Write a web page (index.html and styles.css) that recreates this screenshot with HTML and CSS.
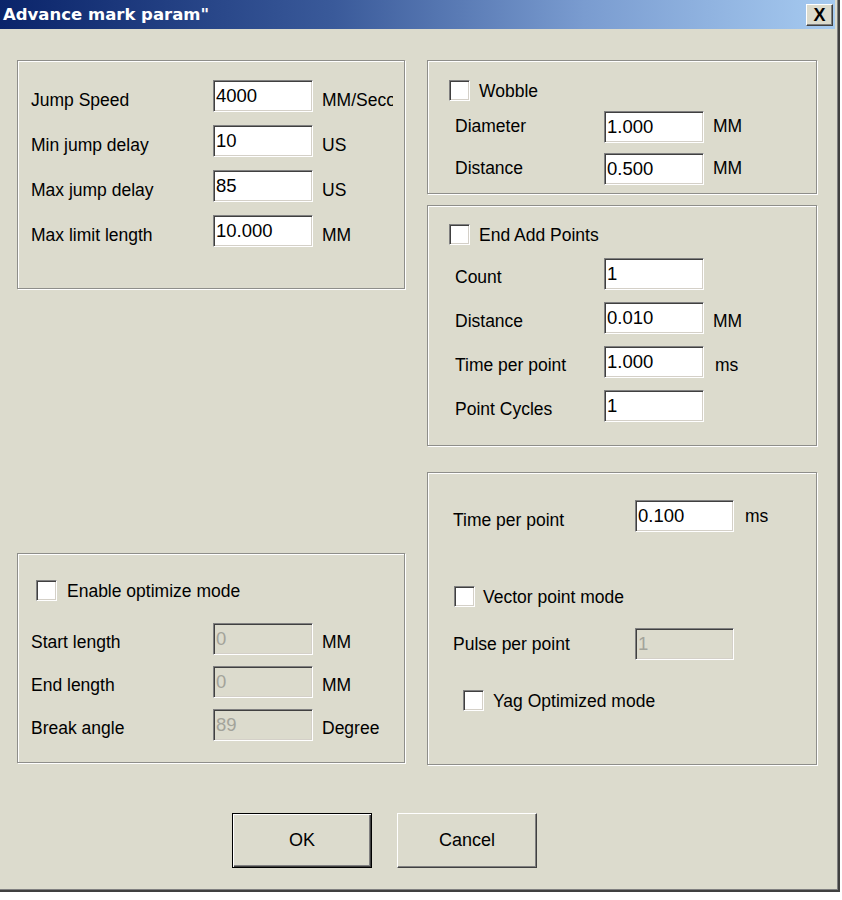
FILE: index.html
```html
<!DOCTYPE html>
<html>
<head>
<meta charset="utf-8">
<title>Advance mark param</title>
<link rel="stylesheet" href="styles.css">
</head>
<body>
<div class="window">
  <div class="titlebar">
    <span class="title">Advance mark param"</span>
    <span class="close">X</span>
  </div>
  <div class="client">
    <div class="columns">
      <div class="col col-left">
        <div class="group g1">
          <div class="row"><span class="lbl">Jump Speed</span><input class="field" type="text" value="4000" readonly><span class="unit clip">MM/Second</span></div>
          <div class="row"><span class="lbl">Min jump delay</span><input class="field" type="text" value="10" readonly><span class="unit">US</span></div>
          <div class="row"><span class="lbl">Max jump delay</span><input class="field" type="text" value="85" readonly><span class="unit">US</span></div>
          <div class="row"><span class="lbl">Max limit length</span><input class="field" type="text" value="10.000" readonly><span class="unit">MM</span></div>
        </div>
        <div class="group g4">
          <div class="check"><span class="cb"></span><span class="cap">Enable optimize mode</span></div>
          <div class="row"><span class="lbl">Start length</span><input class="field" type="text" value="0" disabled><span class="unit">MM</span></div>
          <div class="row"><span class="lbl">End length</span><input class="field" type="text" value="0" disabled><span class="unit">MM</span></div>
          <div class="row"><span class="lbl">Break angle</span><input class="field" type="text" value="89" disabled><span class="unit">Degree</span></div>
        </div>
      </div>
      <div class="col col-right">
        <div class="group g2">
          <div class="check"><span class="cb"></span><span class="cap">Wobble</span></div>
          <div class="row"><span class="lbl">Diameter</span><input class="field" type="text" value="1.000" readonly><span class="unit">MM</span></div>
          <div class="row"><span class="lbl">Distance</span><input class="field" type="text" value="0.500" readonly><span class="unit">MM</span></div>
        </div>
        <div class="group g3">
          <div class="check"><span class="cb"></span><span class="cap">End Add Points</span></div>
          <div class="row"><span class="lbl">Count</span><input class="field" type="text" value="1" readonly></div>
          <div class="row"><span class="lbl">Distance</span><input class="field" type="text" value="0.010" readonly><span class="unit">MM</span></div>
          <div class="row"><span class="lbl">Time per point</span><input class="field" type="text" value="1.000" readonly><span class="unit ms">ms</span></div>
          <div class="row"><span class="lbl">Point Cycles</span><input class="field" type="text" value="1" readonly></div>
        </div>
        <div class="group g5">
          <div class="row r-time"><span class="lbl">Time per point</span><input class="field" type="text" value="0.100" readonly><span class="unit">ms</span></div>
          <div class="check c-vector"><span class="cb"></span><span class="cap">Vector point mode</span></div>
          <div class="row r-pulse"><span class="lbl">Pulse per point</span><input class="field" type="text" value="1" disabled></div>
          <div class="check c-yag"><span class="cb"></span><span class="cap">Yag Optimized mode</span></div>
        </div>
      </div>
    </div>
    <div class="buttons">
      <span class="btn btn-default">OK</span>
      <span class="btn">Cancel</span>
    </div>
  </div>
</div>
</body>
</html>
```
FILE: styles.css
```css
* { box-sizing: border-box; }

body {
  margin: 0;
  background: #ffffff;
  font-family: "Liberation Sans", Arial, sans-serif;
  font-size: 17.5px;
  color: #000;
}

.window {
  width: 840px;
  height: 892px;
  background: #dcdbcd;
  border-right: 2px solid #404040;
  border-bottom: 2px solid #404040;
  box-shadow: inset -1px -1px #808080;
}

.titlebar {
  height: 29px;
  margin-right: 3px;
  background: linear-gradient(to right, #0a246a 0%, #3a5a9a 40%, #7a9cd0 70%, #a6caf0 100%);
  display: flex;
  align-items: center;
  justify-content: space-between;
  padding: 0 2px 0 3px;
}

.title {
  font-family: "DejaVu Sans", sans-serif;
  font-weight: bold;
  font-size: 16.5px;
  color: #fff;
  line-height: 29px;
}

.close {
  width: 27px;
  height: 22px;
  background: #dcdbcd;
  border: 1px solid;
  border-color: #fff #404040 #404040 #fff;
  box-shadow: inset -1px -1px #808080;
  display: flex;
  align-items: center;
  justify-content: center;
  font-family: "Liberation Sans", Arial, sans-serif;
  font-weight: bold;
  font-size: 18px;
  line-height: 1;
  color: #000;
}

.client {
  padding: 31px 0 0 17px;
}

.columns {
  display: flex;
  gap: 22px;
}

.col {
  display: flex;
  flex-direction: column;
}

.col-left { width: 388px; }
.col-right { width: 390px; }

.group {
  border: 1px solid #8e8e8a;
  box-shadow: inset 1px 1px #fff, 1px 1px #fff;
  display: flex;
  flex-direction: column;
}

.row {
  display: flex;
  align-items: flex-start;
}

.lbl, .unit, .cap {
  line-height: 20px;
  white-space: nowrap;
}

.field {
  width: 100px;
  height: 32px;
  margin: 0;
  padding: 0 2px;
  font-family: "Liberation Sans", Arial, sans-serif;
  font-size: 18.5px;
  color: #000;
  background: #fff;
  border: 1px solid;
  border-color: #808080 #fff #fff #808080;
  box-shadow: inset 1px 1px #404040, inset -1px -1px #d4d0c8;
  outline: none;
}

.field:disabled {
  background: #dcdbcd;
  color: #a3a39a;
  -webkit-text-fill-color: #a3a39a;
  opacity: 1;
}

.unit { margin-left: 9px; }
.clip { width: 71px; overflow: hidden; }

.check {
  display: flex;
  align-items: center;
}

.cb {
  width: 21px;
  height: 21px;
  flex: none;
  background: #fff;
  border: 1px solid;
  border-color: #808080 #fff #fff #808080;
  box-shadow: inset 1px 1px #404040, inset -1px -1px #d4d0c8;
}

.cap {
  margin-left: 9px;
  padding-top: 2px;
}

/* Group 1: jump settings */
.g1 {
  height: 229px;
  padding: 19px 0 0 13px;
  gap: 13px;
}
.g1 .lbl { width: 182px; }
.g1 .lbl, .g1 .unit { padding-top: 10px; }

/* Group 4: optimize mode */
.g4 {
  height: 210px;
  margin-top: 264px;
  padding: 25px 0 0 13px;
}
.g4 .check { margin-left: 5px; }
.g4 .cap { margin-left: 10px; }
.g4 .row { margin-top: 11px; }
.g4 .check + .row { margin-top: 22px; }
.g4 .lbl { width: 182px; }
.g4 .lbl, .g4 .unit { padding-top: 9px; }

/* Group 2: wobble */
.g2 {
  height: 134px;
  padding: 18px 0 0 21px;
}
.g2 .row { margin: 10px 0 0 6px; }
.g2 .lbl { width: 149px; }
.g2 .lbl, .g2 .unit { padding-top: 5px; }

/* Group 3: end add points */
.g3 {
  height: 241px;
  margin-top: 11px;
  padding: 17px 0 0 21px;
}
.g3 .row { margin: 12px 0 0 6px; }
.g3 .check + .row { margin-top: 13px; }
.g3 .lbl { width: 149px; }
.g3 .lbl, .g3 .unit { padding-top: 9px; }
.g3 .ms { margin-left: 11px; }

/* Group 5: point mode */
.g5 {
  height: 293px;
  margin-top: 26px;
  padding: 27px 0 0 25px;
}
.g5 .lbl { width: 182px; }
.g5 .field { width: 99px; }
.r-time .lbl { padding-top: 10px; }
.r-time .unit { margin-left: 11px; padding-top: 6px; }
.c-vector { margin: 53px 0 0 1px; }
.c-vector .cap { margin-left: 8px; }
.r-pulse { margin-top: 21px; }
.r-pulse .lbl { padding-top: 6px; }
.c-yag { margin: 29px 0 0 10px; }
.c-yag .cap { margin-left: 9px; }

/* Buttons */
.buttons {
  display: flex;
  gap: 25px;
  margin-top: 48px;
  padding-left: 215px;
}

.btn {
  width: 140px;
  height: 55px;
  display: flex;
  align-items: center;
  justify-content: center;
  font-size: 18px;
  background: #dcdbcd;
  border: 1px solid;
  border-color: #fff #404040 #404040 #fff;
  box-shadow: inset -1px -1px #808080;
}

.btn-default {
  border: 1px solid #000;
  box-shadow: inset 1px 1px #fff, inset -1px -1px #404040, inset -2px -2px #808080;
}
```
